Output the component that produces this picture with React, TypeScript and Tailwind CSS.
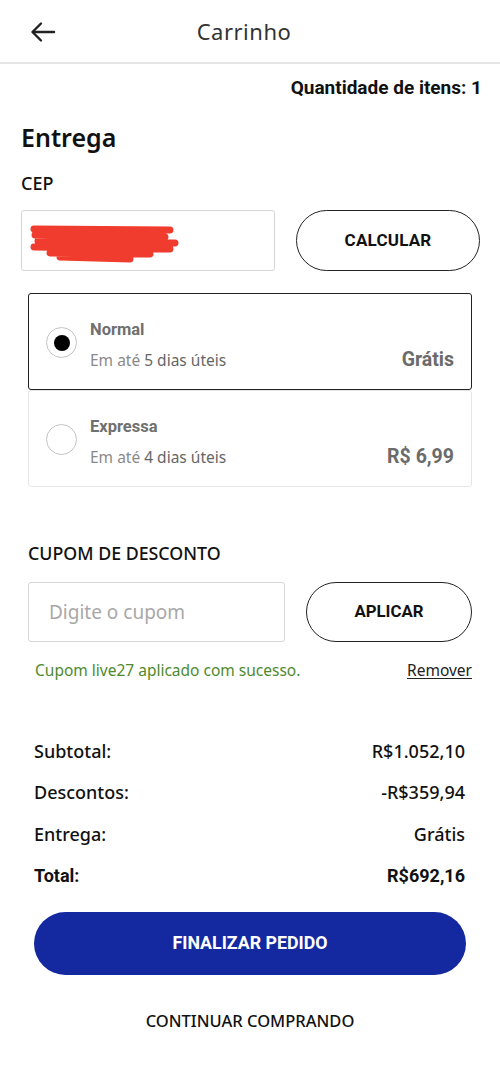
import React, { useState } from 'react';

const sans = "font-['Noto_Sans',_'Open_Sans',_sans-serif]";
const bold = "font-['Roboto',_'Liberation_Sans',_sans-serif]";

const ShippingOption = ({
  title,
  days,
  price,
  selected,
  onSelect,
}: {
  title: string;
  days: string;
  price: string;
  selected: boolean;
  onSelect: () => void;
}) => (
  <button
    onClick={onSelect}
    className={`flex h-[97px] w-full items-start rounded-[3px] pl-[17px] pr-[17px] pt-[26px] text-left ${
      selected ? 'border-[1.5px] border-[#222]' : 'border border-[#e6e6e6]'
    }`}
  >
    <span className="mt-[7px] flex h-[31px] w-[31px] shrink-0 items-center justify-center rounded-full border border-[#c4c4c4]">
      {selected && <span className="h-[16px] w-[16px] rounded-full bg-black" />}
    </span>
    <div className="ml-[13px] flex flex-1 flex-col">
      <span className={`${bold} text-[16.5px] font-bold leading-[20px] text-[#707070]`}>{title}</span>
      <div className="mt-[9px] flex items-end justify-between">
        <span className={`${sans} text-[15.5px] leading-[22px] text-[#8a8a8a]`}>
          Em até <span className="text-[#666]">{days}</span>
        </span>
        <span className={`${bold} text-[19.5px] font-bold leading-[22px] text-[#6b6b6b]`}>{price}</span>
      </div>
    </div>
  </button>
);

const SummaryRow = ({ label, value, strong }: { label: string; value: string; strong?: boolean }) => (
  <div className="flex h-[26px] items-center justify-between">
    <span className={strong ? `${bold} text-[18px] font-bold text-[#111]` : `${sans} text-[18px] font-medium text-[#111]`}>
      {label}
    </span>
    <span className={strong ? `${bold} text-[18px] font-bold text-[#111]` : `${sans} text-[18px] font-medium text-[#111]`}>
      {value}
    </span>
  </div>
);

export default function App() {
  const [shipping, setShipping] = useState<'normal' | 'expressa'>('normal');

  return (
    <div className={`${sans} h-[1070px] w-[500px] overflow-hidden bg-white text-[#111]`}>
      {/* Header */}
      <header className="relative flex h-[64px] items-center justify-center border-b-2 border-[#e4e4e4] pr-[12px]">
        <button className="absolute left-[30px] top-[20px]">
          <svg width="26" height="24" viewBox="0 0 26 24" fill="none" stroke="#222" strokeWidth="2.4" strokeLinecap="round" strokeLinejoin="round">
            <path d="M24 12H3" />
            <path d="M11 3.5L2.5 12L11 20.5" />
          </svg>
        </button>
        <h1 className="text-[22px] font-normal tracking-[0.5px] text-[#333]">Carrinho</h1>
      </header>

      <div className="flex justify-end pr-[18px] pt-[11px]">
        <span className={`${bold} text-[19px] font-bold leading-[26px] text-[#111]`}>Quantidade de itens: 1</span>
      </div>

      {/* Entrega */}
      <section className="px-[21px] pt-[19px]">
        <h2 className="text-[25px] font-semibold leading-[34px]">Entrega</h2>
        <p className="mt-[17px] text-[18px] font-medium leading-[24px]">CEP</p>
        <div className="mt-[15px] flex items-center justify-between">
          <div className="relative h-[61px] w-[254px] rounded-[3px] border border-[#d6d6d6]">
            <svg className="absolute left-[8px] top-[14px]" width="150" height="40" viewBox="0 0 150 40">
              <path d="M4 4 L140 5 M5 10 L135 12 M8 16 L145 18 M4 22 L140 24 M20 28 L120 29 M30 32 L100 34" stroke="#f03c2e" strokeWidth="7" strokeLinecap="round" fill="none" />
            </svg>
          </div>
          <button className={`${bold} mr-[-1px] h-[61px] w-[184px] rounded-full border-[1.5px] border-[#222] text-[17px] font-bold tracking-[0.2px] text-[#111]`}>
            CALCULAR
          </button>
        </div>
      </section>

      <section className="px-[28px] pt-[22px]">
        <div className="flex flex-col">
          <ShippingOption title="Normal" days="5 dias úteis" price="Grátis" selected={shipping === 'normal'} onSelect={() => setShipping('normal')} />
          <ShippingOption title="Expressa" days="4 dias úteis" price="R$ 6,99" selected={shipping === 'expressa'} onSelect={() => setShipping('expressa')} />
        </div>
      </section>

      {/* Cupom */}
      <section className="px-[28px] pt-[54px]">
        <p className="text-[17.8px] font-medium leading-[24px]">CUPOM DE DESCONTO</p>
        <div className="mt-[17px] flex items-center justify-between">
          <input
            placeholder="Digite o cupom"
            className="h-[60px] w-[257px] rounded-[3px] border border-[#d6d6d6] px-[20px] text-[19px] text-[#333] outline-none placeholder:text-[#a8a8a8]"
          />
          <button className={`${bold} h-[60px] w-[166px] rounded-full border-[1.5px] border-[#222] text-[16.8px] font-bold text-[#111]`}>
            APLICAR
          </button>
        </div>
        <div className="mt-[17px] flex items-center justify-between pl-[7px]">
          <span className="text-[15.5px] text-[#4e8a2c]">Cupom live27 aplicado com sucesso.</span>
          <a href="#remover" className="text-[15.5px] text-[#222] underline underline-offset-2">Remover</a>
        </div>
      </section>

      {/* Resumo */}
      <section className="px-[34px] pt-[56px]">
        <div className="flex flex-col gap-[15.5px] pr-[1px]">
          <SummaryRow label="Subtotal:" value="R$1.052,10" />
          <SummaryRow label="Descontos:" value="-R$359,94" />
          <SummaryRow label="Entrega:" value="Grátis" />
          <SummaryRow label="Total:" value="R$692,16" strong />
        </div>
        <button className={`${bold} mt-[23px] h-[63px] w-full rounded-full bg-[#1428a0] text-[17.8px] font-bold text-white`}>
          FINALIZAR PEDIDO
        </button>
        <button className="mt-[34px] w-full text-center text-[16.5px] font-medium text-[#111]">
          CONTINUAR COMPRANDO
        </button>
      </section>
    </div>
  );
}
